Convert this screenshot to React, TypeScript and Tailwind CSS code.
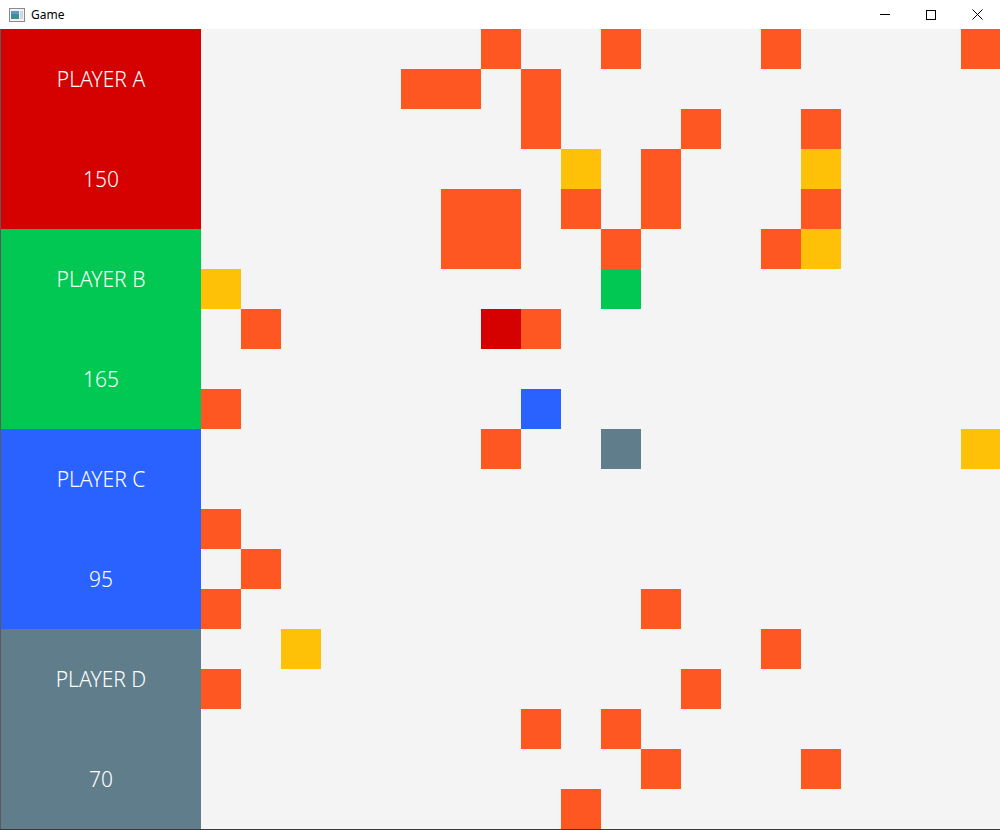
import React from "react";

const O = "#ff5722";
const Y = "#ffc107";
const R = "#d50000";
const G = "#00c853";
const B = "#2962ff";
const S = "#607d8b";

const cells: Record<string, string> = {};
const put = (r: number, c: number, col: string) => {
  cells[`${r}-${c}`] = col;
};
[
  [0, 7], [0, 10], [0, 14], [0, 19],
  [1, 5], [1, 6], [1, 8],
  [2, 8], [2, 12], [2, 15],
  [3, 11],
  [4, 6], [4, 7], [4, 9], [4, 11], [4, 15],
  [5, 6], [5, 7], [5, 10], [5, 14],
  [7, 1], [7, 8],
  [9, 0],
  [10, 7],
  [12, 0], [13, 1], [14, 0], [14, 11], [15, 14], [16, 0], [16, 12],
  [17, 8], [17, 10], [18, 11], [18, 15], [19, 9],
].forEach(([r, c]) => put(r, c, O));
[[3, 9], [3, 15], [5, 15], [6, 0], [10, 19], [15, 2]].forEach(([r, c]) => put(r, c, Y));
put(6, 10, G);
put(7, 7, R);
put(9, 8, B);
put(10, 10, S);

const players = [
  { name: "PLAYER A", score: "150", bg: "bg-[#d50000]" },
  { name: "PLAYER B", score: "165", bg: "bg-[#00c853]" },
  { name: "PLAYER C", score: "95", bg: "bg-[#2962ff]" },
  { name: "PLAYER D", score: "70", bg: "bg-[#607d8b]" },
];

export default function App() {
  const grid = [];
  for (let r = 0; r < 20; r++) {
    for (let c = 0; c < 20; c++) {
      const col = cells[`${r}-${c}`];
      grid.push(
        <div key={`${r}-${c}`} className="w-[40px] h-[40px]" style={col ? { background: col } : undefined} />
      );
    }
  }
  return (
    <div className="w-[1000px] h-[830px] overflow-hidden bg-white flex flex-col" style={{ fontFamily: '"Noto Sans", "Open Sans", sans-serif' }}>
      <div className="h-[29px] flex items-center bg-white shrink-0 relative">
        <svg width="16" height="14" viewBox="0 0 16 14" className="ml-[9px]">
          <rect x="0.5" y="0.5" width="15" height="13" fill="#f2f2f2" stroke="#8a8a8a" />
          <rect x="2" y="3" width="8" height="8" fill="#3f8f8a" />
          <rect x="2" y="3" width="8" height="3" fill="#5a9ad0" />
          <rect x="11" y="3" width="3" height="8" fill="#cfd8dc" />
        </svg>
        <span className="ml-[6px] text-[12px] text-black" style={{ fontFamily: '"Noto Sans", sans-serif' }}>Game</span>
        <div className="ml-auto flex items-center h-full">
          <div className="w-[46px] h-full flex items-center justify-center">
            <div className="w-[10px] h-[1px] bg-black" />
          </div>
          <div className="w-[46px] h-full flex items-center justify-center">
            <div className="w-[10px] h-[10px] border border-black" />
          </div>
          <div className="w-[46px] h-full flex items-center justify-center">
            <svg width="11" height="11" viewBox="0 0 11 11">
              <path d="M0.5 0.5 L10.5 10.5 M10.5 0.5 L0.5 10.5" stroke="black" strokeWidth="1" />
            </svg>
          </div>
        </div>
      </div>
      <div className="flex h-[800px] shrink-0">
        <div className="w-[1px] bg-[#5a5a5a] shrink-0" />
        <div className="w-[200px] flex flex-col shrink-0">
          {players.map((p) => (
            <div key={p.name} className={`h-[200px] flex flex-col text-white text-[21px] font-light ${p.bg}`}>
              <div className="h-[100px] pt-[2px] flex items-center justify-center">{p.name}</div>
              <div className="h-[100px] pt-[2px] flex items-center justify-center">{p.score}</div>
            </div>
          ))}
        </div>
        <div className="bg-[#f4f4f4] w-[800px] shrink-0 grid grid-cols-[repeat(20,40px)] grid-rows-[repeat(20,40px)]">
          {grid}
        </div>
      </div>
      <div className="h-[1px] bg-[#3a3a3a] shrink-0" />
    </div>
  );
}
